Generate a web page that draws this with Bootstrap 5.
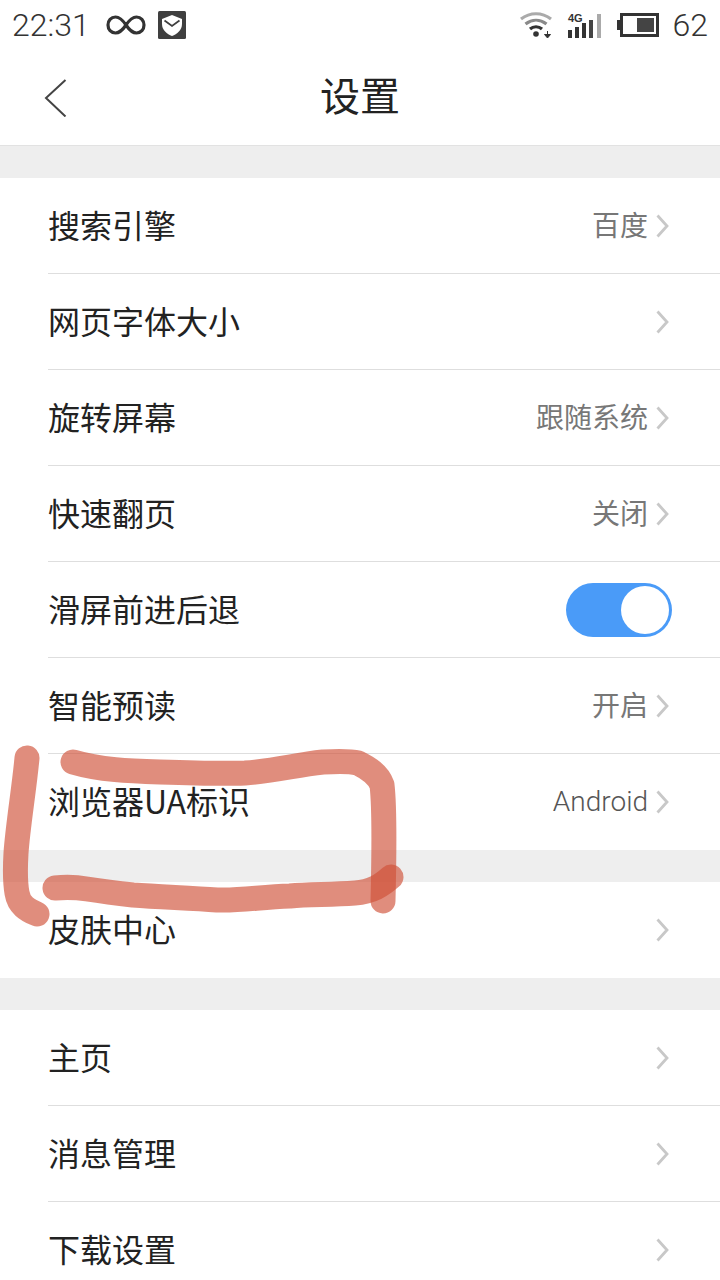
<!DOCTYPE html>
<html lang="zh-CN">
<head>
<meta charset="utf-8">
<title>设置</title>
<link rel="stylesheet" href="https://cdn.jsdelivr.net/npm/bootstrap@5.3.0/dist/css/bootstrap.min.css">
<style>
html,body{height:1280px;overflow:hidden;}
body{background:#eeeeee;font-family:"Roboto","Noto Sans CJK SC",sans-serif;color:#222;position:relative;}
.statusline{height:50px;padding:0 12px 0 12px;color:#444;background:#fff;}
.clock,.level{font-family:"Roboto",sans-serif;font-weight:300;font-size:32px;line-height:1;color:#333;}
.iconinf{margin-left:16px;}
.iconshield{margin-left:12px;}
.iconwifi{margin-right:14px;}
.iconsignal{margin-right:14px;}
.iconbatt{margin-right:14px;}
.titlebar{height:96px;background:#fff;border-bottom:1px solid #e2e2e2;position:relative;}
.titletext{font-family:"Noto Sans CJK SC",sans-serif;font-size:40px;font-weight:400;line-height:1;color:#222;margin:-8px 0 0;}
.backicon{position:absolute;left:44px;top:29px;}
.groupgap{height:32px;background:#eeeeee;}
.settingsgroup{background:#fff;border-radius:0;}
.settingrow{height:96px;margin-left:48px;padding:0 72px 0 0;background:#fff;border:0;border-bottom:1px solid #dedede;border-radius:0!important;position:relative;}
.settingrow:last-child{border-bottom:0;}
.rowlabel{font-family:"Noto Sans CJK SC",sans-serif;font-size:32px;line-height:1;color:#222;margin-top:-4px;}
.rowvalue{font-family:"Noto Sans CJK SC",sans-serif;font-size:28px;line-height:1;color:#777;margin-top:-4px;}
.rowvalue.latin{font-family:"Roboto",sans-serif;font-weight:300;font-size:28px;color:#555;margin-top:0;}
.chevron{position:absolute;right:51px;top:35px;}
.slider{position:absolute;right:48px;top:21px;width:106px;height:54px;border-radius:27px;background:#4a9bf8;}
.sliderknob{position:absolute;right:3px;top:3px;width:48px;height:48px;border-radius:50%;background:#fff;}
.markup{position:absolute;left:0;top:0;pointer-events:none;}
.markup path{fill:none;stroke:#cf5038;stroke-width:25;stroke-linecap:round;stroke-linejoin:round;opacity:.65;}
</style>
</head>
<body>
<svg width="0" height="0" class="position-absolute">
<defs>
<symbol id="chev" viewBox="0 0 14 26"><path d="M2.500 2.500 12 13 2.500 23.500" fill="none" stroke="#c8c8c8" stroke-width="2.800"/></symbol>
</defs>
</svg>

<header>
<div class="statusline d-flex align-items-center justify-content-between">
  <div class="d-flex align-items-center">
    <span class="clock">22:31</span>
    <svg class="iconinf" width="40" height="22" viewBox="0 0 40 22" aria-hidden="true"><path d="M20 11C16 5 13 3 9.500 3 5 3 2 6.500 2 11s3 8 7.500 8C13 19 16 17 20 11c4-6 7-8 10.500-8C35 3 38 6.500 38 11s-3 8-7.500 8C27 19 24 17 20 11Z" fill="none" stroke="#333" stroke-width="3.200"/></svg>
    <svg class="iconshield" width="28" height="28" viewBox="0 0 28 28" aria-hidden="true"><rect width="28" height="28" rx="1.500" fill="#3f3f3f"/><path d="M14 4 24 8V13C24 19 19 23 14 25 9 23 4 19 4 13V8Z" fill="#fff"/><path d="M6.500 9.500 14 15 21.500 9.500" fill="none" stroke="#3f3f3f" stroke-width="1.800"/></svg>
  </div>
  <div class="d-flex align-items-center">
    <svg class="iconwifi" width="34" height="28" viewBox="0 0 34 28" aria-hidden="true"><path d="M2 8C11 1 23 1 32 8" fill="none" stroke="#aaa" stroke-width="3.200"/><path d="M6.500 13C13 8 21 8 27.500 13" fill="none" stroke="#8a8a8a" stroke-width="3.200"/><path d="M11 18C14.500 15 19.500 15 23 18" fill="none" stroke="#333" stroke-width="3.200"/><circle cx="17" cy="23" r="2.800" fill="#333"/><path d="M28.500 20v4.500M25.500 23.500h6l-3 3.500z" fill="#333" stroke="#333"/></svg>
    <svg class="iconsignal" width="36" height="28" viewBox="0 0 36 28" aria-hidden="true"><rect x="1" y="19" width="4" height="8" fill="#333"/><rect x="8" y="16" width="4" height="11" fill="#333"/><rect x="15" y="12" width="4" height="15" fill="#333"/><rect x="22" y="9" width="4" height="18" fill="#444"/><rect x="30" y="3" width="4" height="24" fill="#aaa"/><text x="1" y="11" font-family="Liberation Sans,sans-serif" font-size="11" font-weight="700" fill="#333">4G</text></svg>
    <svg class="iconbatt" width="42" height="26" viewBox="0 0 42 26" aria-hidden="true"><rect x="0" y="8" width="3" height="10" fill="#333"/><rect x="4.500" y="2.500" width="36" height="21" fill="none" stroke="#333" stroke-width="3"/><rect x="20" y="6" width="17" height="14" fill="#444"/></svg>
    <span class="level">62</span>
  </div>
</div>
<div class="titlebar d-flex align-items-center justify-content-center">
  <svg class="backicon" width="24" height="38" viewBox="0 0 24 38" aria-hidden="true"><path d="M21.500 1 2 19 21.500 37.500" fill="none" stroke="#444" stroke-width="2"/></svg>
  <h1 class="titletext">设置</h1>
</div>
</header>

<main>
<div class="groupgap"></div>
<div class="list-group list-group-flush settingsgroup">
  <div class="list-group-item settingrow d-flex align-items-center justify-content-between"><span class="rowlabel">搜索引擎</span><span class="rowvalue">百度</span><svg class="chevron" width="14" height="26"><use href="#chev"/></svg></div>
  <div class="list-group-item settingrow d-flex align-items-center justify-content-between"><span class="rowlabel">网页字体大小</span><svg class="chevron" width="14" height="26"><use href="#chev"/></svg></div>
  <div class="list-group-item settingrow d-flex align-items-center justify-content-between"><span class="rowlabel">旋转屏幕</span><span class="rowvalue">跟随系统</span><svg class="chevron" width="14" height="26"><use href="#chev"/></svg></div>
  <div class="list-group-item settingrow d-flex align-items-center justify-content-between"><span class="rowlabel">快速翻页</span><span class="rowvalue">关闭</span><svg class="chevron" width="14" height="26"><use href="#chev"/></svg></div>
  <div class="list-group-item settingrow d-flex align-items-center justify-content-between"><span class="rowlabel">滑屏前进后退</span><span class="slider"><span class="sliderknob"></span></span></div>
  <div class="list-group-item settingrow d-flex align-items-center justify-content-between"><span class="rowlabel">智能预读</span><span class="rowvalue">开启</span><svg class="chevron" width="14" height="26"><use href="#chev"/></svg></div>
  <div class="list-group-item settingrow d-flex align-items-center justify-content-between"><span class="rowlabel">浏览器UA标识</span><span class="rowvalue latin">Android</span><svg class="chevron" width="14" height="26"><use href="#chev"/></svg></div>
</div>
<div class="groupgap"></div>
<div class="list-group list-group-flush settingsgroup">
  <div class="list-group-item settingrow d-flex align-items-center justify-content-between"><span class="rowlabel">皮肤中心</span><svg class="chevron" width="14" height="26"><use href="#chev"/></svg></div>
</div>
<div class="groupgap"></div>
<div class="list-group list-group-flush settingsgroup">
  <div class="list-group-item settingrow d-flex align-items-center justify-content-between"><span class="rowlabel">主页</span><svg class="chevron" width="14" height="26"><use href="#chev"/></svg></div>
  <div class="list-group-item settingrow d-flex align-items-center justify-content-between"><span class="rowlabel">消息管理</span><svg class="chevron" width="14" height="26"><use href="#chev"/></svg></div>
  <div class="list-group-item settingrow d-flex align-items-center justify-content-between"><span class="rowlabel">下载设置</span><svg class="chevron" width="14" height="26"><use href="#chev"/></svg></div>
</div>
</main>

<svg class="markup" width="720" height="1280" viewBox="0 0 720 1280" aria-hidden="true">
  <path d="M27 758C24 790 18 825 16 853 15 870 15 882 17 893 19 905 27 910 37 914"/>
  <path d="M73 762C100 770 130 771 160 772 190 773 220 774 245 773 275 771 295 765 323 762 340 761 350 761 358 763 368 768 378 774 382 785 385 810 384 860 383 901"/>
  <path d="M391 877C382 885 372 892 355 893 330 895 310 894 290 896 260 897 240 901 217 900 190 898 160 897 133 895 115 893 100 891 87 889 75 887 65 887 55 888"/>
</svg>
<script src="https://cdn.jsdelivr.net/npm/bootstrap@5.3.0/dist/js/bootstrap.bundle.min.js"></script>
</body>
</html>
